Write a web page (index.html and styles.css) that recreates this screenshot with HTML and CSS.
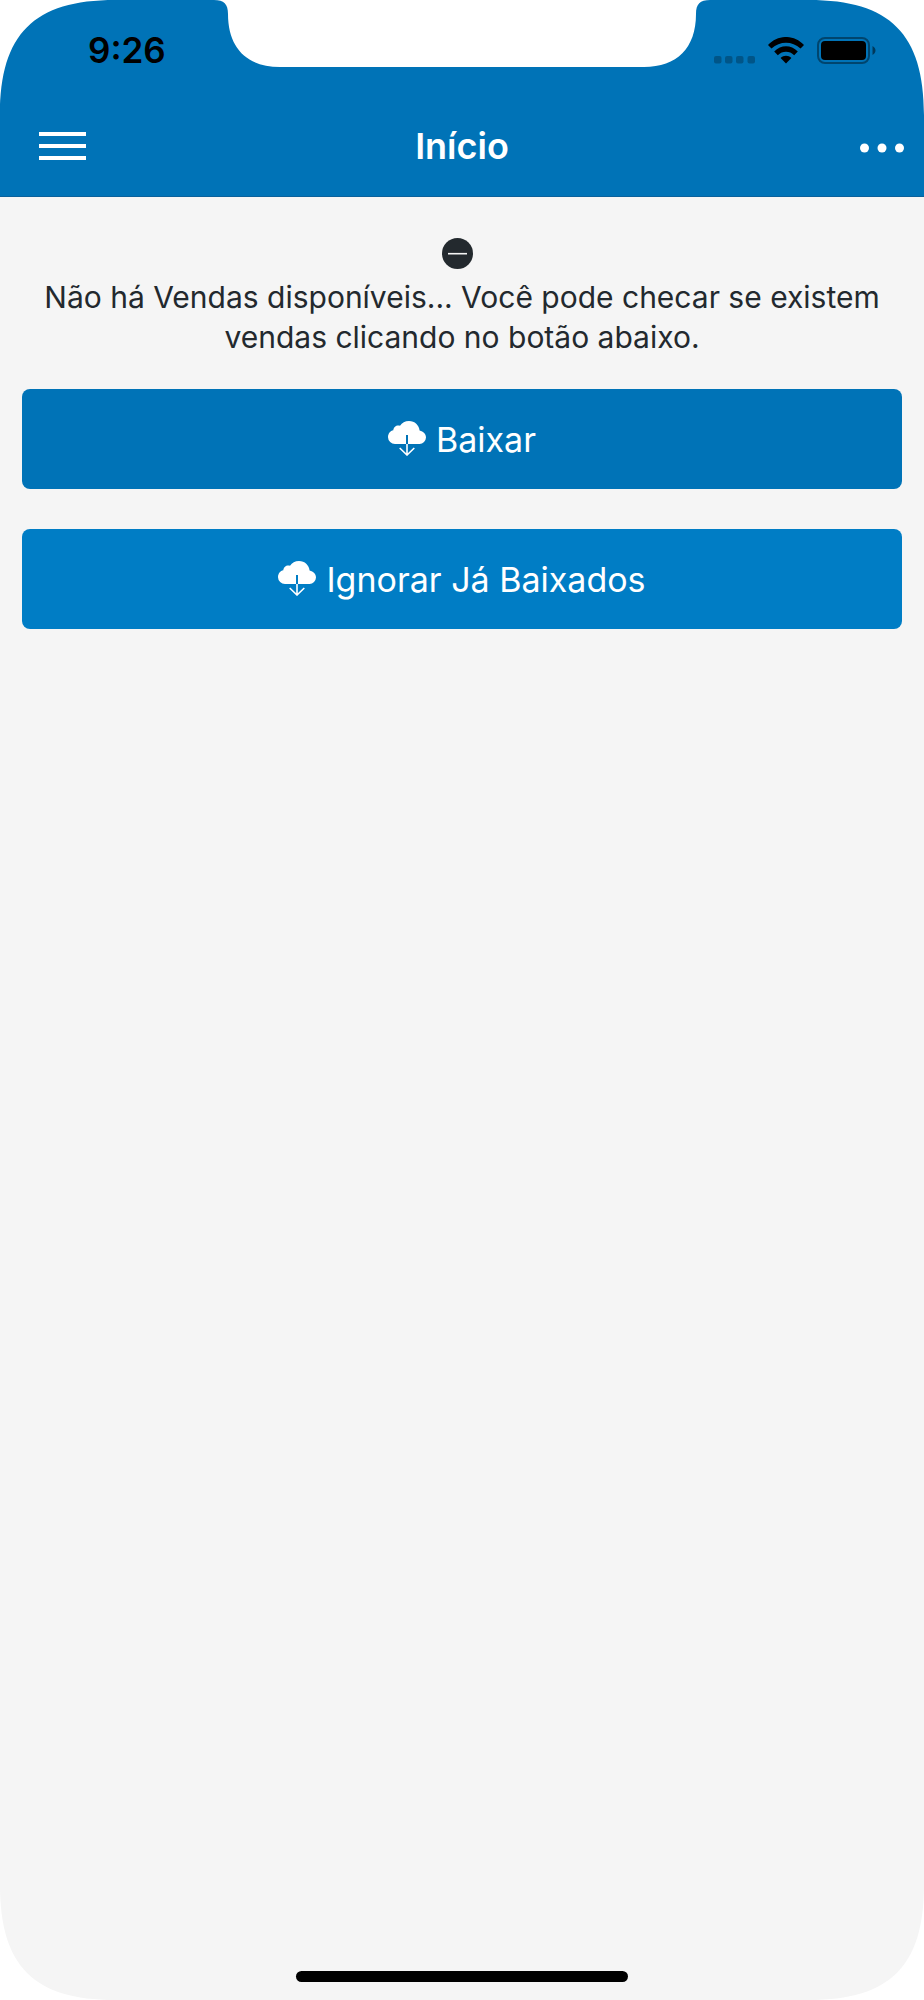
FILE: index.html
```html
<!doctype html>
<html lang="pt-BR">
<head>
<meta charset="utf-8">
<meta name="viewport" content="width=device-width, initial-scale=1">
<title>Início</title>
<link rel="stylesheet" href="styles.css">
</head>
<body>
	<div class="screen">
		<header class="header">
			<div class="status">
				<span class="time">9:26</span>
				<div class="status-icons">
					<svg class="signal" width="41" height="8" viewBox="0 0 41 8">
						<rect x="0" y="0" width="7.500" height="7.500" rx="2"/>
						<rect x="11" y="0" width="7.500" height="7.500" rx="2"/>
						<rect x="22" y="0" width="7.500" height="7.500" rx="2"/>
						<rect x="33.500" y="0" width="7.500" height="7.500" rx="2"/>
					</svg>
					<svg class="wifi" width="36" height="27" viewBox="0 0 36 27">
						<path d="M0 8C10-2.700 26-2.700 36 8L32.500 11.600C24 3.700 12 3.700 3.500 11.600Z"/>
						<path d="M6.200 14.500C13 7.500 23 7.500 29.800 14.500L26.200 18.200C21.500 13.700 14.500 13.700 9.800 18.200Z"/>
						<path d="M12.600 21C15.500 18 20.500 18 23.400 21L18 26.500Z"/>
					</svg>
					<svg class="battery" width="60" height="27" viewBox="0 0 60 27">
						<rect x="1" y="1" width="51" height="25" rx="7" fill="none" stroke="#000" stroke-opacity=".4" stroke-width="2"/>
						<rect x="4" y="4" width="45" height="19" rx="4"/>
						<path d="M55.500 9C59.500 11 59.500 16 55.500 18Z" opacity=".5"/>
					</svg>
				</div>
			</div>
			<nav class="navbar">
				<button class="nav-btn" type="button" aria-label="Menu">
					<svg width="47" height="28" viewBox="0 0 47 28">
						<path d="M0 2H47M0 14H47M0 26H47" stroke="#fff" stroke-width="4"/>
					</svg>
				</button>
				<h1 class="title">Início</h1>
				<button class="nav-btn nav-more" type="button" aria-label="Mais opções">
					<svg width="44" height="28" viewBox="0 0 44 28">
						<circle cx="4.500" cy="16" r="4.500"/>
						<circle cx="22" cy="16" r="4.500"/>
						<circle cx="39.500" cy="16" r="4.500"/>
					</svg>
				</button>
			</nav>
		</header>

		<main class="content">
			<div class="empty">
				<svg class="empty-icon" width="31" height="31" viewBox="0 0 31 31">
					<circle cx="15.500" cy="15.500" r="15.500" fill="#23292e"/>
					<path d="M6 15.700H25" stroke="#f5f5f5" stroke-width="1.600"/>
				</svg>
				<p class="message">Não há Vendas disponíveis... Você pode checar se existem vendas clicando no botão abaixo.</p>
			</div>
			<button class="btn btn-primary" type="button">
				<svg class="cloud" width="38" height="35" viewBox="0 0 38 35">
					<path fill="#fff" d="M7 23A7 7 0 0 1 0 16.200C0 12.600 2.300 10 5.300 9.300C5.500 6 8.500 3.700 12 4.700C14 1.800 17 0 21 0C26.800 0 31 4.200 31.600 9.500C35.400 10.300 38 13 38 16.500A6.800 6.800 0 0 1 31.500 23Z"/>
					<path class="cut" d="M19 14V23"/>
					<path class="arrow" d="M19 23V34M11.700 27L19 34L26.300 27"/>
				</svg>
				Baixar
			</button>
			<button class="btn btn-secondary" type="button">
				<svg class="cloud" width="38" height="35" viewBox="0 0 38 35">
					<path fill="#fff" d="M7 23A7 7 0 0 1 0 16.200C0 12.600 2.300 10 5.300 9.300C5.500 6 8.500 3.700 12 4.700C14 1.800 17 0 21 0C26.800 0 31 4.200 31.600 9.500C35.400 10.300 38 13 38 16.500A6.800 6.800 0 0 1 31.500 23Z"/>
					<path class="cut" d="M19 14V23"/>
					<path class="arrow" d="M19 23V34M11.700 27L19 34L26.300 27"/>
				</svg>
				Ignorar Já Baixados
			</button>
		</main>

		<div class="home-bar"></div>

		<!-- device frame: notch and rounded corners -->
		<svg class="notch" width="496" height="68" viewBox="0 0 496 68">
			<path fill="#fff" d="M0 0C10 0 14 4 14 14C14 48 33 67 66 67H430C463 67 482 48 482 14C482 4 486 0 496 0Z"/>
		</svg>
		<svg class="corner top-left" viewBox="0 0 115 115"><path d="M0 0H115C34 0 0 34 0 115Z"/></svg>
		<svg class="corner top-right" viewBox="0 0 115 115"><path d="M0 0H115C34 0 0 34 0 115Z"/></svg>
		<svg class="corner bottom-left" viewBox="0 0 115 115"><path d="M0 0H115C34 0 0 34 0 115Z"/></svg>
		<svg class="corner bottom-right" viewBox="0 0 115 115"><path d="M0 0H115C34 0 0 34 0 115Z"/></svg>
	</div>
</body>
</html>
```

FILE: styles.css
```css
*{
	margin:0;
	padding:0;
	box-sizing: border-box;
}
body{
	background: #fff;
	font-family: Inter, "Liberation Sans", sans-serif;
}
button{
	border:0;
	font: inherit;
	cursor: pointer;
}
svg{
	display: block;
	flex: none;
}
.screen{
	position: relative;
	display: flex;
	flex-direction: column;
	min-height: 100vh;
	background: #f5f5f5;
	overflow: hidden;
}

/* header */
.header{
	background: #0073b7;
	border-bottom: 1px solid #0a619b;
}
.status{
	display: flex;
	justify-content: space-between;
	align-items: center;
	height: 100px;
	padding: 0 47px 0 88px;
}
.time{
	font-size: 35px;
	font-weight: 600;
	color: #000;
}
.status-icons{
	display: flex;
	align-items: flex-end;
	gap: 13px;
}
.signal{
	opacity: .25;
}
.navbar{
	display: grid;
	grid-template-columns: 1fr auto 1fr;
	align-items: center;
	height: 96px;
	padding: 0 20px 4px;
}
.nav-btn{
	justify-self: start;
	padding-left: 19px;
	background: none;
}
.nav-more{
	justify-self: end;
	fill: #fff;
}
.title{
	font-size: 36px;
	font-weight: 600;
	color: #fff;
}

/* content */
.content{
	display: flex;
	flex-direction: column;
	gap: 40px;
	padding: 41px 22px;
}
.empty{
	display: flex;
	flex-direction: column;
	align-items: center;
	gap: 8px;
	margin-bottom: -8px;
	text-align: center;
	color: #23292e;
}
.empty-icon{
	margin-right: 10px;
}
.message{
	font-size: 30px;
	line-height: 40px;
}
.btn{
	display: flex;
	justify-content: center;
	align-items: center;
	gap: 10px;
	height: 100px;
	border-radius: 8px;
	font-size: 34px;
	color: #fff;
}
.btn-primary{
	background: #0073b7;
	stroke: #0073b7;
}
.btn-secondary{
	background: #007dc5;
	stroke: #007dc5;
}
.cloud{
	margin-bottom: 2px;
}
.cloud path{
	stroke-width: 0;
}
.cloud .cut{
	stroke-width: 2;
}
.cloud .arrow{
	fill: none;
	stroke: #fff;
	stroke-width: 1.6;
}

.home-bar{
	width: 36%;
	height: 11px;
	margin: auto auto 18px;
	border-radius: 6px;
	background: #000;
}

/* device frame */
.notch{
	position: absolute;
	top:0;
	left:50%;
	transform: translateX(-50%);
}
.corner{
	position: absolute;
	width: 115px;
	height: 115px;
	fill: #fff;
}
.top-left{
	top:0;
	left:0;
}
.top-right{
	top:0;
	right:0;
	transform: rotate(90deg);
}
.bottom-left{
	bottom:0;
	left:0;
	transform: rotate(-90deg);
}
.bottom-right{
	bottom:0;
	right:0;
	transform: rotate(180deg);
}
```
